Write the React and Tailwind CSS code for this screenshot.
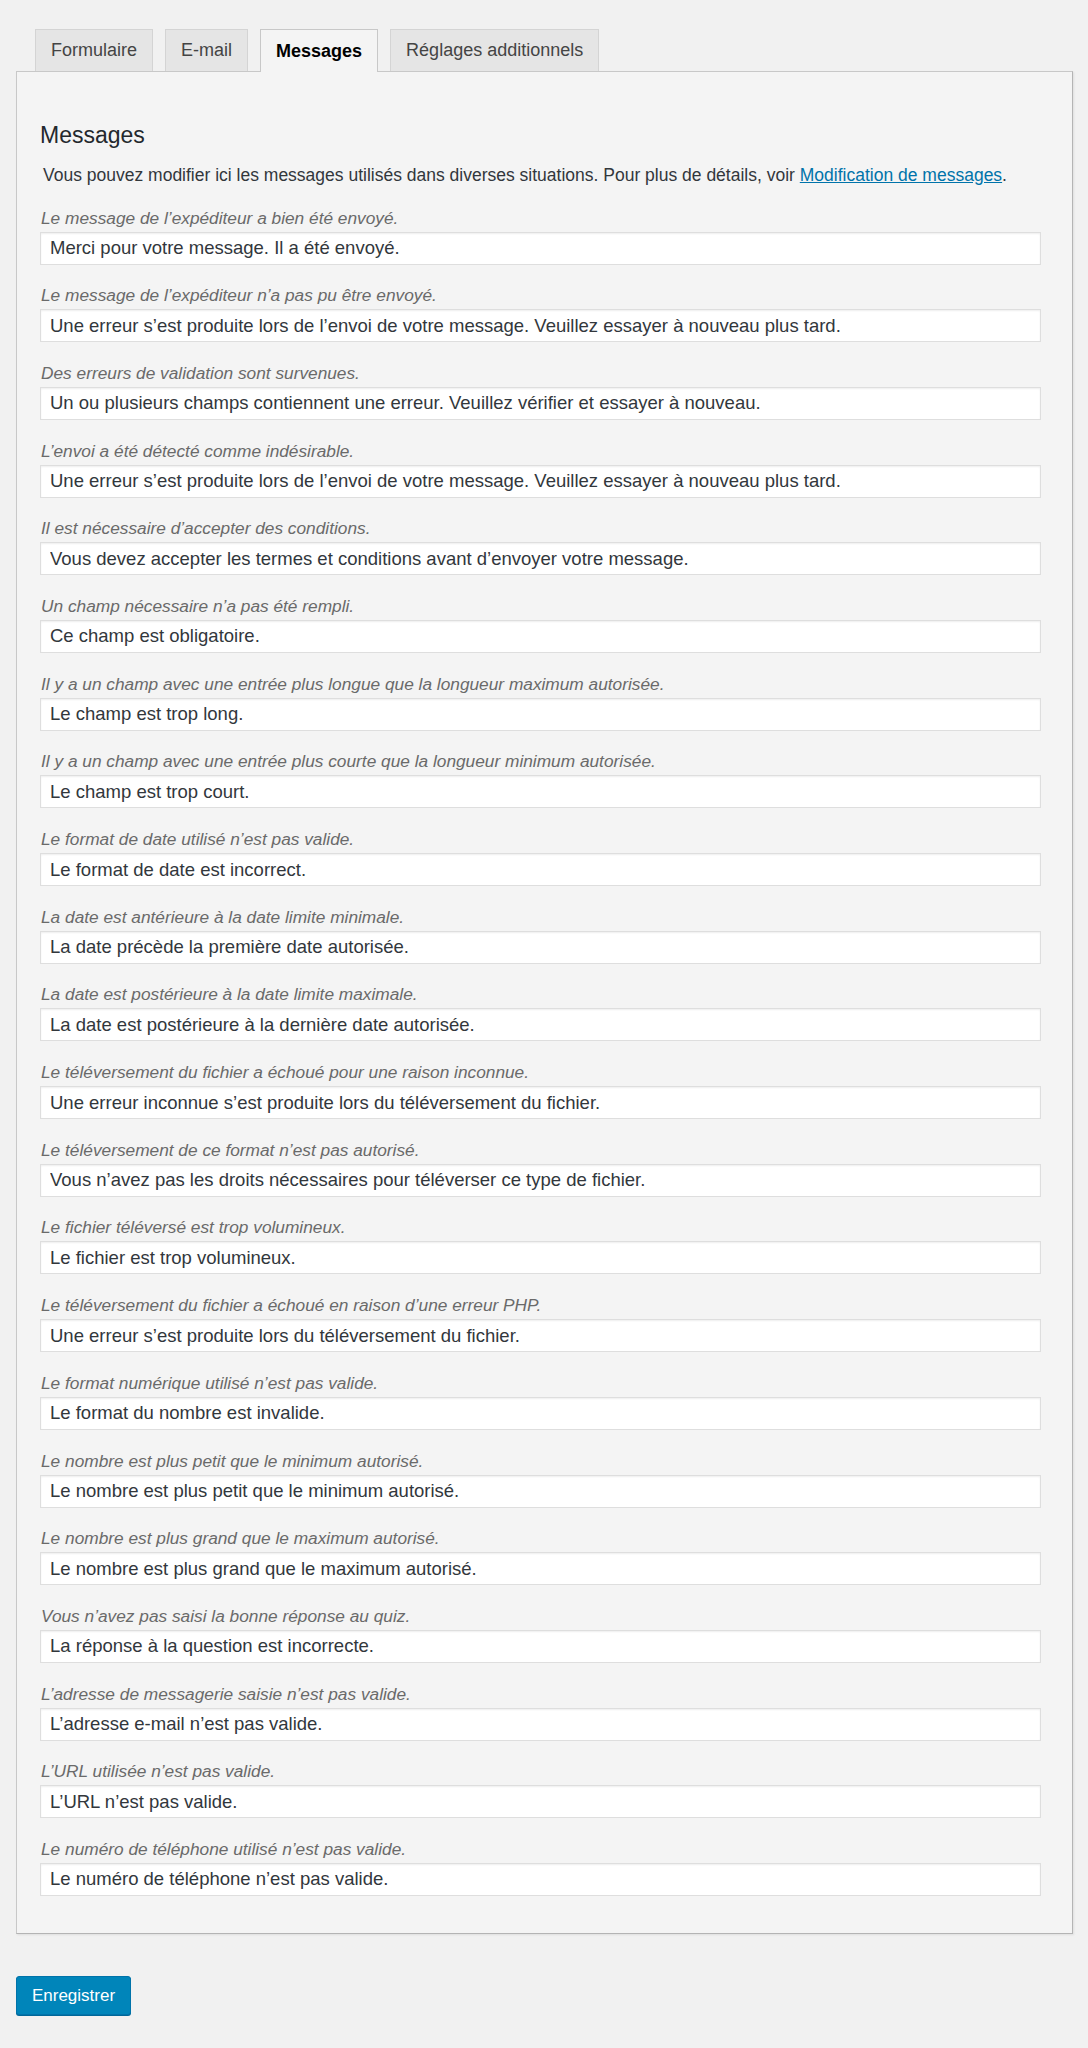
const tabs = ["Formulaire", "E-mail", "Messages", "Réglages additionnels"]

const messages = [
  ["Le message de l’expéditeur a bien été envoyé.", "Merci pour votre message. Il a été envoyé."],
  ["Le message de l’expéditeur n’a pas pu être envoyé.", "Une erreur s’est produite lors de l’envoi de votre message. Veuillez essayer à nouveau plus tard."],
  ["Des erreurs de validation sont survenues.", "Un ou plusieurs champs contiennent une erreur. Veuillez vérifier et essayer à nouveau."],
  ["L’envoi a été détecté comme indésirable.", "Une erreur s’est produite lors de l’envoi de votre message. Veuillez essayer à nouveau plus tard."],
  ["Il est nécessaire d’accepter des conditions.", "Vous devez accepter les termes et conditions avant d’envoyer votre message."],
  ["Un champ nécessaire n’a pas été rempli.", "Ce champ est obligatoire."],
  ["Il y a un champ avec une entrée plus longue que la longueur maximum autorisée.", "Le champ est trop long."],
  ["Il y a un champ avec une entrée plus courte que la longueur minimum autorisée.", "Le champ est trop court."],
  ["Le format de date utilisé n’est pas valide.", "Le format de date est incorrect."],
  ["La date est antérieure à la date limite minimale.", "La date précède la première date autorisée."],
  ["La date est postérieure à la date limite maximale.", "La date est postérieure à la dernière date autorisée."],
  ["Le téléversement du fichier a échoué pour une raison inconnue.", "Une erreur inconnue s’est produite lors du téléversement du fichier."],
  ["Le téléversement de ce format n’est pas autorisé.", "Vous n’avez pas les droits nécessaires pour téléverser ce type de fichier."],
  ["Le fichier téléversé est trop volumineux.", "Le fichier est trop volumineux."],
  ["Le téléversement du fichier a échoué en raison d’une erreur PHP.", "Une erreur s’est produite lors du téléversement du fichier."],
  ["Le format numérique utilisé n’est pas valide.", "Le format du nombre est invalide."],
  ["Le nombre est plus petit que le minimum autorisé.", "Le nombre est plus petit que le minimum autorisé."],
  ["Le nombre est plus grand que le maximum autorisé.", "Le nombre est plus grand que le maximum autorisé."],
  ["Vous n’avez pas saisi la bonne réponse au quiz.", "La réponse à la question est incorrecte."],
  ["L’adresse de messagerie saisie n’est pas valide.", "L’adresse e-mail n’est pas valide."],
  ["L’URL utilisée n’est pas valide.", "L’URL n’est pas valide."],
  ["Le numéro de téléphone utilisé n’est pas valide.", "Le numéro de téléphone n’est pas valide."],
]

function Tab({ label, active }) {
  if (active) {
    return (
      <div className="h-[43px] px-[15px] flex items-center border border-[#c8c8c8] border-b-0 bg-[#f4f4f4] text-[18px] font-bold text-black -mb-px relative z-10">
        {label}
      </div>
    )
  }
  return (
    <div className="h-[42px] px-[15px] flex items-center border border-[#d4d4d4] border-b-0 bg-[#e5e5e5] text-[18px] text-[#444]">
      {label}
    </div>
  )
}

function MessageRow({ label, value }) {
  return (
    <div className="mb-[18.7px] last:mb-0">
      <div className="h-[24px] leading-[24px] text-[17.3px] italic text-[#6a6a6a] pl-px">{label}</div>
      <input
        type="text"
        defaultValue={value}
        className="mt-[2px] w-[1001px] h-[33px] px-[9px] bg-white border border-[#dedede] shadow-[inset_0_1px_2px_rgba(0,0,0,0.07)] text-[18.5px] text-[#32373c] outline-none"
        style={{ fontFamily: "inherit" }}
      />
    </div>
  )
}

export default function App() {
  return (
    <div className="min-h-[2048px] bg-[#f1f1f1] pt-[29px] pl-[16px] font-['Liberation_Sans',Arial,sans-serif]">
      <div className="flex gap-[12px] pl-[19px] items-end">
        {tabs.map((t) => (
          <Tab key={t} label={t} active={t === "Messages"} />
        ))}
      </div>

      <div className="w-[1057px] border border-[#c8c8c8] border-r-[#b4b4b4] border-b-[#b4b4b4] bg-[#f4f4f4] shadow-[1px_1px_2px_rgba(0,0,0,0.08)] pt-[48px] pl-[23px] pb-[37px]">
        <h2 className="text-[23px] leading-[30px] text-[#23282d]">Messages</h2>
        <p className="mt-[12.5px] mb-[19px] pl-[3px] text-[17.5px] leading-[24px] text-[#32373c]">
          Vous pouvez modifier ici les messages utilisés dans diverses situations. Pour plus de détails, voir{" "}
          <a href="#" className="text-[#0073aa] underline">Modification de messages</a>.
        </p>

        {messages.map(([label, value]) => (
          <MessageRow key={label} label={label} value={value} />
        ))}
      </div>

      <button className="mt-[42px] w-[115px] h-[39px] bg-[#0085ba] border border-[#0073aa] rounded-[3px] shadow-[0_1px_0_#006799] text-white text-[17px]">
        Enregistrer
      </button>
    </div>
  )
}
